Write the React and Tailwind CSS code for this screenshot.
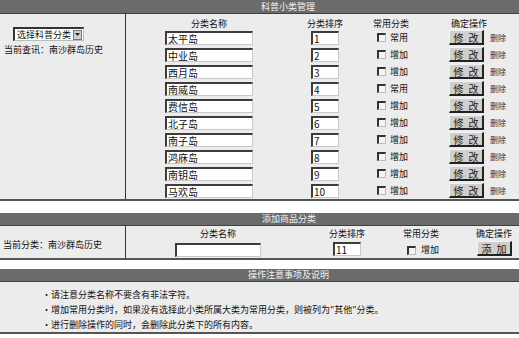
import React from 'react';

const FONT = { fontFamily: '"Noto Sans CJK SC", "Noto Sans", sans-serif' };

const ROWS = [
  { name: '太平岛', sort: '1', tag: '常用' },
  { name: '中业岛', sort: '2', tag: '增加' },
  { name: '西月岛', sort: '3', tag: '增加' },
  { name: '南威岛', sort: '4', tag: '常用' },
  { name: '费信岛', sort: '5', tag: '增加' },
  { name: '北子岛', sort: '6', tag: '增加' },
  { name: '南子岛', sort: '7', tag: '增加' },
  { name: '鸿庥岛', sort: '8', tag: '增加' },
  { name: '南钥岛', sort: '9', tag: '增加' },
  { name: '马欢岛', sort: '10', tag: '增加' },
];

// inset text box, like an old form input
const Field = ({ value, className }) => (
  <div
    className={`h-[14px] bg-white border-t-2 border-l-2 border-t-[#3c3c3c] border-l-[#3c3c3c] border-r border-b border-r-[#c8c8c8] border-b-[#c8c8c8] pl-[1px] text-[10px] leading-[11px] text-[#111] overflow-hidden whitespace-nowrap ${className}`}
  >
    {value}
  </div>
);

const Check = () => (
  <span className="inline-block w-[9px] h-[9px] bg-[#f4f4f4] border-t-2 border-l-2 border-t-[#333] border-l-[#333] border-r border-b border-r-[#bbb] border-b-[#bbb]"></span>
);

// raised grey button, two glyphs spread apart
const Btn = ({ a, b }) => (
  <div className="w-[35px] h-[15px] bg-[#cfcfcf] border-t border-l border-t-[#f2f2f2] border-l-[#f2f2f2] border-r-2 border-b-2 border-r-[#222] border-b-[#222] flex items-center justify-center gap-[5px] text-[10px] leading-[11px] text-[#222]">
    <span>{a}</span>
    <span>{b}</span>
  </div>
);

const Bar = ({ title, pad }) => (
  <div className={`h-[13px] bg-[#6b6b6b] border-b border-[#404040] flex items-center text-[9px] text-[#f2f2f2] ${pad}`}>
    {title}
  </div>
);

export default function App() {
  return (
    <div className="w-[519px] h-[338px] bg-white overflow-hidden text-[#111]" style={FONT}>
      {/* 科普小类管理 */}
      <Bar title="科普小类管理" pad="pl-[261px] h-[14px]" />
      <div className="flex h-[187px] bg-[#ececec] border-b-2 border-[#555]">
        <div className="w-[126px] border-r border-[#333] pt-[13px]">
          <div className="ml-[13px] w-[71px] h-[14px] bg-white border-t-2 border-l-2 border-t-[#333] border-l-[#333] border-r border-b border-r-[#bbb] border-b-[#bbb] flex items-center">
            <span className="flex-1 pl-[2px] text-[9px] leading-[10px] whitespace-nowrap">选择科普分类</span>
            <span className="w-[9px] h-[10px] mr-[1px] bg-[#d0d0d0] border border-[#777] flex items-center justify-center">
              <svg width="5" height="3" viewBox="0 0 5 3"><path d="M0 0h5L2.5 3z" fill="#222" /></svg>
            </span>
          </div>
          <div className="ml-[4px] mt-[2px] text-[9px] whitespace-nowrap">当前查讯：南沙群岛历史</div>
        </div>
        <div className="flex-1 flex flex-col">
          <div className="h-[15px] flex items-end text-[9px] leading-[10px]">
            <div className="w-[154px] pl-[39px]"><div className="w-[88px] text-center">分类名称</div></div>
            <div className="w-[80px] pl-[23px]"><div className="w-[44px] text-center">分类排序</div></div>
            <div className="w-[70px] pl-[13px]">常用分类</div>
            <div className="flex-1 pl-[21px]">确定操作</div>
          </div>
          {ROWS.map((r) => (
            <div key={r.sort} className="h-[17px] flex items-center">
              <div className="w-[154px] pl-[39px]"><Field value={r.name} className="w-[88px]" /></div>
              <div className="w-[80px] pl-[31px]">
                <Field value={r.sort} className="w-[28px] text-[9px]" />
              </div>
              <div className="w-[70px] pl-[17px] flex items-center gap-[4px] text-[9px]">
                <Check />
                <span>{r.tag}</span>
              </div>
              <div className="flex-1 pl-[19px] flex items-center gap-[6px]">
                <Btn a="修" b="改" />
                <span className="text-[8px] text-[#333]">删除</span>
              </div>
            </div>
          ))}
        </div>
      </div>

      {/* 添加商品分类 */}
      <div className="h-[12px]"></div>
      <Bar title="添加商品分类" pad="pl-[262px]" />
      <div className="flex h-[34px] bg-[#ececec] border-b-2 border-[#555]">
        <div className="w-[126px] border-r border-[#333] flex items-center pl-[3px] pt-[6px] text-[9px] whitespace-nowrap">
          当前分类：南沙群岛历史
        </div>
        <div className="flex-1 flex flex-col">
          <div className="h-[13px] flex items-end text-[9px] leading-[10px]">
            <div className="w-[174px] pl-[49px]"><div className="w-[86px] text-center">分类名称</div></div>
            <div className="w-[80px] pl-[29px]">分类排序</div>
            <div className="w-[80px] pl-[23px]">常用分类</div>
            <div className="flex-1 pl-[16px]">确定操作</div>
          </div>
          <div className="flex-1 flex items-center">
            <div className="w-[174px] pl-[49px] pt-[3px]"><Field value="" className="w-[86px]" /></div>
            <div className="w-[80px] pl-[33px]"><Field value="11" className="w-[28px] text-[9px]" /></div>
            <div className="w-[80px] pl-[27px] pt-[3px] flex items-center gap-[5px] text-[9px]">
              <Check />
              <span>增加</span>
            </div>
            <div className="flex-1 pl-[17px]"><Btn a="添" b="加" /></div>
          </div>
        </div>
      </div>

      {/* 操作注意事项及说明 */}
      <div className="h-[9px]"></div>
      <Bar title="操作注意事项及说明" pad="pl-[248px]" />
      <div className="h-[52px] bg-[#ececec] border-b-2 border-[#555] pl-[42px] pt-[5px] text-[9px] leading-[15px]">
        <div>·请注意分类名称不要含有非法字符。</div>
        <div>·增加常用分类时，如果没有选择此小类所属大类为常用分类，则被列为"其他"分类。</div>
        <div>·进行删除操作的同时，会删除此分类下的所有内容。</div>
      </div>
    </div>
  );
}
